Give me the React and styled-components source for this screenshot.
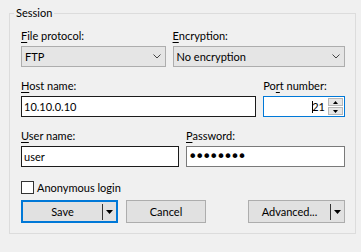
import React from 'react';
import styled, {createGlobalStyle} from 'styled-components';

const Global = createGlobalStyle`
html, body {
  margin: 0;
  background: #f0f0f0;
}
body {
  font-family: Lato, "Noto Sans", sans-serif;
  font-size: 11px;
  color: #000;
}
`

const Page = styled.div`
width: 361px;
height: 252px;
box-sizing: border-box;
padding: 5px 0 0 9px;
`

const Group = styled.fieldset`
width: 347px;
box-sizing: border-box;
margin: 0;
padding: 7px 10px 10px 11px;
border: 1px solid #dcdcdc;
min-width: 0;
`

const Legend = styled.legend`
padding: 0 2px;
margin-left: -7px;
line-height: 16px;
`

const Row = styled.div`
display: flex;
gap: ${({gap}) => gap ?? 7}px;
margin-bottom: ${({mb}) => mb ?? 11}px;
`

const Field = styled.div`
display: flex;
flex-direction: column;
gap: 2px;
width: ${({w}) => w}px;
`

const Label = styled.label`
line-height: 16px;
white-space: nowrap;
u { text-decoration: underline; text-underline-offset: 2px; }
`

const Combo = styled.div`
height: 21px;
box-sizing: border-box;
border: 1px solid #adadad;
background: #e5e5e5;
display: flex;
align-items: center;
justify-content: space-between;
padding: 0 4px 0 3px;
`

const TextBox = styled.input`
height: 21px;
box-sizing: border-box;
border: 1px solid ${({dark}) => dark ? '#1b1b1b' : '#7a7a7a'};
background: #fff;
font: inherit;
padding: 0 2px;
margin: 0;
outline: none;
color: #000;
&[type="password"] {
  font-family: "DejaVu Sans", sans-serif;
  font-size: 16px;
  letter-spacing: -2.4px;
  padding-left: 1px;
}
`

const PortBox = styled.div`
height: 21px;
box-sizing: border-box;
border: 1px solid #0078d7;
background: #fff;
display: flex;
align-items: center;
padding: 0 1px 0 2px;
`

const PortValue = styled.div`
flex: 1;
display: flex;
justify-content: flex-end;
align-items: center;
padding-right: 3px;
`

const Caret = styled.span`
width: 1px;
height: 12px;
background: #000;
margin-right: -1px;
`

const Spinner = styled.div`
display: flex;
flex-direction: column;
gap: 1px;
`

const SpinBtn = styled.div`
width: 15px;
height: 8px;
box-sizing: border-box;
border: 1px solid #b8b8b8;
background: #e6e6e6;
display: flex;
align-items: center;
justify-content: center;
`

const CheckRow = styled.label`
display: flex;
align-items: center;
gap: 3px;
height: 16px;
margin-bottom: 5px;
margin-top: 2px;
`

const Box = styled.span`
width: 13px;
height: 13px;
box-sizing: border-box;
border: 1px solid #333;
background: #fff;
`

const Buttons = styled.div`
display: flex;
gap: 8px;
`

const Button = styled.button`
width: ${({w}) => w}px;
height: 23px;
box-sizing: border-box;
margin: 0;
padding: 0;
border: ${({focused}) => focused ? '2px solid #0078d7' : '1px solid #adadad'};
background: #e1e1e1;
font: inherit;
color: #000;
display: flex;
align-items: center;
margin-left: ${({right}) => right ? 'auto' : '0'};
`

const Caption = styled.span`
flex: 1;
text-align: center;
`

const Split = styled.span`
width: 1px;
height: 16px;
background: #333;
`

const DropPart = styled.span`
width: 13px;
display: flex;
justify-content: center;
`

const Chevron = () => (
    <svg width="8" height="5" viewBox="0 0 8 5">
        <polyline points="0.5,0.5 4,4 7.5,0.5" fill="none" stroke="#444" strokeWidth="1"/>
    </svg>
)

const Tri = ({up, w = 7, h = 4}) => (
    <svg width={w} height={h} viewBox={`0 0 ${w} ${h}`}>
        <polygon points={up ? `0,${h} ${w / 2},0 ${w},${h}` : `0,0 ${w},0 ${w / 2},${h}`} fill="#000"/>
    </svg>
)

export default function App() {
    return (
        <Page>
            <Global/>
            <Group>
                <Legend>Session</Legend>
                <Row>
                    <Field w={145}>
                        <Label><u>F</u>ile protocol:</Label>
                        <Combo>FTP<Chevron/></Combo>
                    </Field>
                    <Field w={173}>
                        <Label><u>E</u>ncryption:</Label>
                        <Combo>No encryption<Chevron/></Combo>
                    </Field>
                </Row>
                <Row>
                    <Field w={236}>
                        <Label><u>H</u>ost name:</Label>
                        <TextBox dark defaultValue="10.10.0.10"/>
                    </Field>
                    <Field w={82}>
                        <Label>Po<u>r</u>t number:</Label>
                        <PortBox>
                            <PortValue><Caret/>21</PortValue>
                            <Spinner>
                                <SpinBtn><Tri up w={5} h={3}/></SpinBtn>
                                <SpinBtn><Tri w={5} h={3}/></SpinBtn>
                            </Spinner>
                        </PortBox>
                    </Field>
                </Row>
                <Row mb={12}>
                    <Field w={159}>
                        <Label><u>U</u>ser name:</Label>
                        <TextBox dark defaultValue="user"/>
                    </Field>
                    <Field w={159}>
                        <Label><u>P</u>assword:</Label>
                        <TextBox type="password" defaultValue="password"/>
                    </Field>
                </Row>
                <CheckRow><Box/>Anonymous login</CheckRow>
                <Buttons>
                    <Button w={97} focused>
                        <Caption>Save</Caption>
                        <Split/>
                        <DropPart><Tri/></DropPart>
                    </Button>
                    <Button w={80}><Caption>Cancel</Caption></Button>
                    <Button w={97} right>
                        <Caption>Advanced...</Caption>
                        <Split/>
                        <DropPart><Tri/></DropPart>
                    </Button>
                </Buttons>
            </Group>
        </Page>
    )
}
